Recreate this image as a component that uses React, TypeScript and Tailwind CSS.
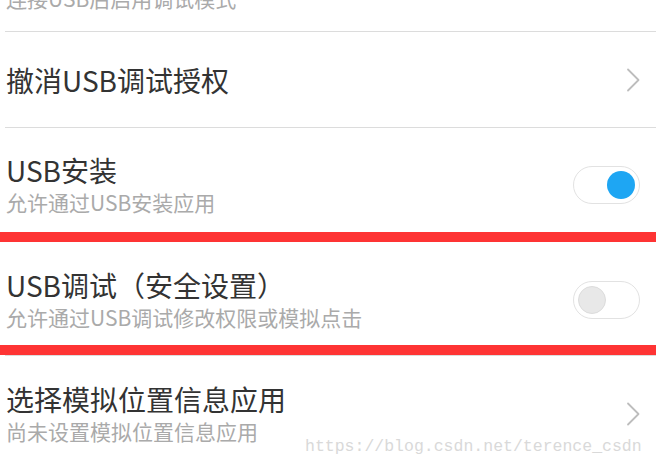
import React from 'react';

const font = { fontFamily: '"Noto Sans CJK SC", "Noto Sans", sans-serif' };

const Chevron: React.FC = () => (
    <svg width="14" height="24" viewBox="0 0 14 24" fill="none">
        <polyline points="2,1.5 12.5,12 2,22.5" stroke="#bdbdbd" strokeWidth="1.8" strokeLinecap="round" strokeLinejoin="round" />
    </svg>
);

const Toggle: React.FC<{ on: boolean }> = ({ on }) => (
    <div className="w-[67px] h-[38px] rounded-full border border-[#e2e2e2] bg-white flex items-center px-[4px] shrink-0">
        {on ? (
            <div className="ml-auto w-[28px] h-[28px] rounded-full bg-[#1ea6f3]" />
        ) : (
            <div className="w-[28px] h-[28px] rounded-full bg-[#e8e8e8] border border-[#dcdcdc]" />
        )}
    </div>
);

const Divider: React.FC = () => <div className="ml-[5px] h-px bg-[#dcdcdc]" />;

const RedBar: React.FC = () => <div className="h-[10px] bg-[#fe3434]" />;

interface RowProps {
    title: string;
    subtitle: string;
    right: React.ReactNode;
    pt: string;
    pb: string;
}

const Row: React.FC<RowProps> = ({ title, subtitle, right, pt, pb }) => (
    <div className={`flex items-center justify-between pl-[6px] pr-[16px] ${pt} ${pb}`}>
        <div>
            <div className="text-[28px] leading-[34px] text-[#333333]">{title}</div>
            <div className="text-[21px] leading-[30px] text-[#aaaaaa]">{subtitle}</div>
        </div>
        {right}
    </div>
);

export default function App() {
    return (
        <div className="relative w-[656px] h-[467px] overflow-hidden bg-white" style={font}>
            <div className="h-[31px] overflow-hidden pl-[6px]">
                <div className="-mt-[17px] text-[21px] leading-[30px] text-[#aaaaaa]">连接USB后启用调试模式</div>
            </div>
            <Divider />
            <div className="h-[95px] flex items-center justify-between pl-[6px] pr-[16px]">
                <div className="text-[28px] leading-[34px] text-[#333333]">撤消USB调试授权</div>
                <Chevron />
            </div>
            <Divider />
            <Row title="USB安装" subtitle="允许通过USB安装应用" right={<Toggle on />} pt="pt-[25px]" pb="pb-[15px]" />
            <RedBar />
            <Row title="USB调试（安全设置）" subtitle="允许通过USB调试修改权限或模拟点击" right={<Toggle on={false} />} pt="pt-[26px]" pb="pb-[13px]" />
            <RedBar />
            <Divider />
            <Row title="选择模拟位置信息应用" subtitle="尚未设置模拟位置信息应用" right={<Chevron />} pt="pt-[26px]" pb="pb-[13px]" />
            <div
                className="absolute left-[305px] top-[436px] text-[16.5px] leading-[22px] text-[#d9d9d9]"
                style={{ fontFamily: '"Liberation Mono", monospace' }}
            >
                https://blog.csdn.net/terence_csdn
            </div>
        </div>
    );
}
